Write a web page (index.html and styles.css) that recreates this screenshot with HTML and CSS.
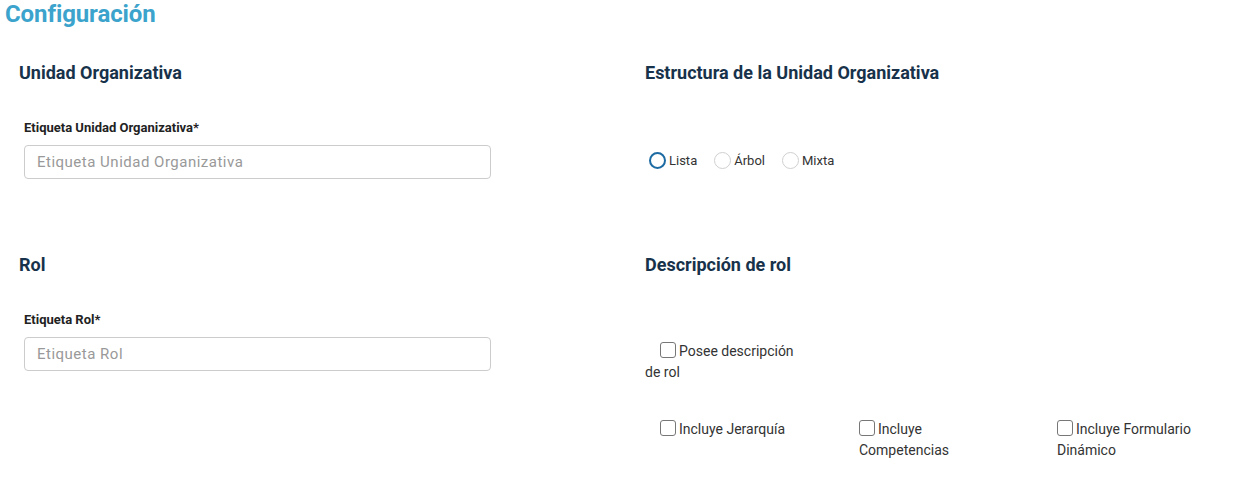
FILE: index.html
```html
<!DOCTYPE html>
<html lang="es">
<head>
<meta charset="utf-8">
<link rel="stylesheet" href="styles.css">
</head>
<body>
<h1 class="title">Configuración</h1>
<div class="grid">
  <section class="col">
    <h2 class="heading">Unidad Organizativa</h2>
    <div class="field">
      <label class="label">Etiqueta Unidad Organizativa*</label>
      <input class="input" type="text" placeholder="Etiqueta Unidad Organizativa">
    </div>
  </section>
  <section class="col">
    <h2 class="heading">Estructura de la Unidad Organizativa</h2>
    <div class="radios">
      <label class="radio"><span class="dot active"></span>Lista</label>
      <label class="radio"><span class="dot"></span>Árbol</label>
      <label class="radio"><span class="dot"></span>Mixta</label>
    </div>
  </section>
  <section class="col">
    <h2 class="heading">Rol</h2>
    <div class="field">
      <label class="label">Etiqueta Rol*</label>
      <input class="input" type="text" placeholder="Etiqueta Rol">
    </div>
  </section>
  <section class="col">
    <h2 class="heading">Descripción de rol</h2>
    <div class="checks-top">
      <label class="check narrow"><span class="box indent"></span>Posee descripción de rol</label>
    </div>
    <div class="checks-row">
      <label class="check"><span class="box"></span>Incluye Jerarquía</label>
      <label class="check"><span class="box"></span>Incluye Competencias</label>
      <label class="check"><span class="box"></span>Incluye Formulario Dinámico</label>
    </div>
  </section>
</div>
</body>
</html>
```
FILE: styles.css
```css
* { box-sizing: border-box; }
html, body { margin: 0; background: #fff; }
body {
  font-family: Roboto, "Noto Sans", sans-serif;
  color: #333;
  padding: 0 4px;
}
.title {
  margin: 0;
  padding-left: 1px;
  font-size: 24px;
  line-height: 28px;
  font-weight: 700;
  color: #3ba3cc;
  letter-spacing: -0.1px;
}
.grid {
  display: grid;
  grid-template-columns: 626px 1fr;
  padding-top: 33px;
}
.col { padding-left: 15px; }
.heading {
  margin: 0;
  padding-top: 2px;
  font-size: 18px;
  line-height: 20px;
  font-weight: 700;
  color: #17324a;
}
.field { padding-left: 5px; padding-top: 38px; height: 170px; }
.label {
  display: block;
  font-size: 13px;
  line-height: 14px;
  font-weight: 700;
  color: #222;
  margin-bottom: 10px;
}
.input {
  display: block;
  width: 467px;
  height: 34px;
  border: 1px solid #ccc;
  border-radius: 4px;
  padding: 0 12px;
  font-family: Roboto, sans-serif;
  font-size: 15px;
  letter-spacing: 0.5px;
  color: #555;
  outline: none;
}
.input::placeholder { color: #999; }
.radios {
  display: flex;
  gap: 17px;
  padding-top: 69px;
  padding-left: 4px;
}
.radio {
  display: flex;
  align-items: center;
  font-size: 13px;
  color: #333;
}
.dot {
  width: 17px;
  height: 17px;
  border-radius: 50%;
  border: 1px solid #d0d0d0;
  margin-right: 3px;
}
.dot.active { border: 2px solid #1d6ba3; }
.checks-top { padding-top: 66px; }
.check {
  display: block;
  font-size: 14px;
  line-height: 21px;
  color: #333;
}
.check.narrow { width: 160px; }
.box {
  display: inline-block;
  width: 16px;
  height: 16px;
  border: 1px solid #777;
  border-radius: 3px;
  vertical-align: -2px;
  margin-right: 3px;
}
.box.indent { margin-left: 15px; }
.checks-row {
  display: grid;
  grid-template-columns: 199px 198px 1fr;
  padding-top: 36px;
  padding-left: 15px;
}
.checks-row .check { width: 145px; }
```
